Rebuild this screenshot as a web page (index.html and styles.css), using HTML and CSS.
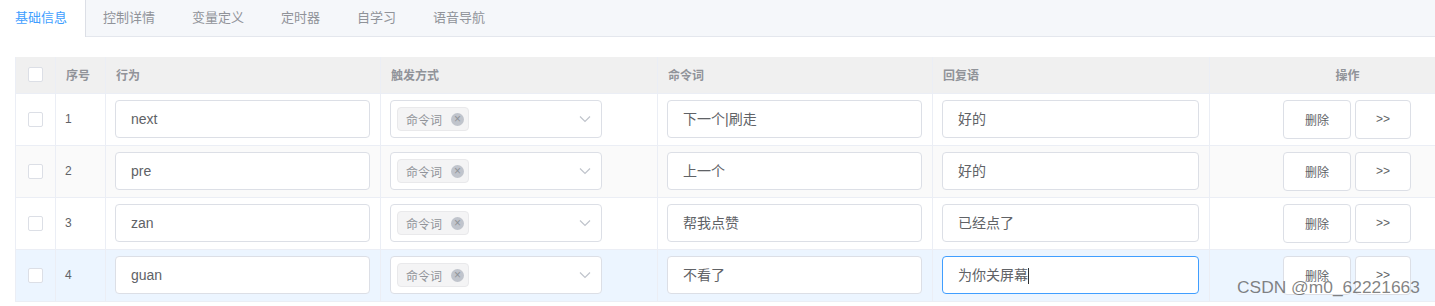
FILE: index.html
```html
<!DOCTYPE html>
<html lang="zh-CN">

<head>
    <meta charset="UTF-8">
    <meta name="viewport" content="width=device-width, initial-scale=1.0">
    <title>基础信息</title>
    <link rel="stylesheet" href="styles.css">
</head>

<body>
    <div class="tabs">
        <div class="tab active">基础信息</div>
        <div class="tab">控制详情</div>
        <div class="tab">变量定义</div>
        <div class="tab">定时器</div>
        <div class="tab">自学习</div>
        <div class="tab">语音导航</div>
    </div>

    <div class="table-wrap">
        <table class="grid">
            <colgroup>
                <col class="c-check">
                <col class="c-index">
                <col class="c-field">
                <col class="c-field2">
                <col class="c-field">
                <col class="c-field2">
                <col class="c-ops">
            </colgroup>
            <thead>
                <tr>
                    <th class="center"><span class="checkbox"></span></th>
                    <th>序号</th>
                    <th>行为</th>
                    <th>触发方式</th>
                    <th>命令词</th>
                    <th>回复语</th>
                    <th class="center">操作</th>
                </tr>
            </thead>
            <tbody>
                <tr>
                    <td class="center"><span class="checkbox"></span></td>
                    <td>1</td>
                    <td><div class="input">next</div></td>
                    <td>
                        <div class="select">
                            <span class="tag">命令词<span class="tag-close">×</span></span>
                            <svg class="arrow" width="12" height="8" viewBox="0 0 12 8"><path d="M1 1.5 L6 6.5 L11 1.5" fill="none" stroke="#c0c4cc" stroke-width="1.2"/></svg>
                        </div>
                    </td>
                    <td><div class="input">下一个|刷走</div></td>
                    <td><div class="input">好的</div></td>
                    <td class="center">
                        <button class="btn btn-del">删除</button><button class="btn btn-more">&gt;&gt;</button>
                    </td>
                </tr>
                <tr class="striped">
                    <td class="center"><span class="checkbox"></span></td>
                    <td>2</td>
                    <td><div class="input">pre</div></td>
                    <td>
                        <div class="select">
                            <span class="tag">命令词<span class="tag-close">×</span></span>
                            <svg class="arrow" width="12" height="8" viewBox="0 0 12 8"><path d="M1 1.5 L6 6.5 L11 1.5" fill="none" stroke="#c0c4cc" stroke-width="1.2"/></svg>
                        </div>
                    </td>
                    <td><div class="input">上一个</div></td>
                    <td><div class="input">好的</div></td>
                    <td class="center">
                        <button class="btn btn-del">删除</button><button class="btn btn-more">&gt;&gt;</button>
                    </td>
                </tr>
                <tr>
                    <td class="center"><span class="checkbox"></span></td>
                    <td>3</td>
                    <td><div class="input">zan</div></td>
                    <td>
                        <div class="select">
                            <span class="tag">命令词<span class="tag-close">×</span></span>
                            <svg class="arrow" width="12" height="8" viewBox="0 0 12 8"><path d="M1 1.5 L6 6.5 L11 1.5" fill="none" stroke="#c0c4cc" stroke-width="1.2"/></svg>
                        </div>
                    </td>
                    <td><div class="input">帮我点赞</div></td>
                    <td><div class="input">已经点了</div></td>
                    <td class="center">
                        <button class="btn btn-del">删除</button><button class="btn btn-more">&gt;&gt;</button>
                    </td>
                </tr>
                <tr class="current">
                    <td class="center"><span class="checkbox"></span></td>
                    <td>4</td>
                    <td><div class="input">guan</div></td>
                    <td>
                        <div class="select">
                            <span class="tag">命令词<span class="tag-close">×</span></span>
                            <svg class="arrow" width="12" height="8" viewBox="0 0 12 8"><path d="M1 1.5 L6 6.5 L11 1.5" fill="none" stroke="#c0c4cc" stroke-width="1.2"/></svg>
                        </div>
                    </td>
                    <td><div class="input">不看了</div></td>
                    <td><div class="input focused">为你关屏幕<span class="caret"></span></div></td>
                    <td class="center">
                        <button class="btn btn-del">删除</button><button class="btn btn-more">&gt;&gt;</button>
                    </td>
                </tr>
            </tbody>
        </table>
    </div>

    <div class="watermark">CSDN @m0_62221663</div>
</body>

</html>
```

FILE: styles.css
```css
html,
body {
    overflow: hidden;
}

body {
    margin: 0;
    padding: 0;
    font-family: "Liberation Sans", "Noto Sans CJK SC", sans-serif;
    color: #606266;
    background: #fff;
}

.tabs {
    display: flex;
    height: 36px;
    background-color: #f5f7fa;
    border-bottom: 1px solid #e4e7ed;
}

.tab {
    padding: 0 19px 0 17px;
    line-height: 36px;
    font-size: 13px;
    color: #909399;
    border-right: 1px solid transparent;
}

.tab.active {
    color: #409eff;
    background-color: #fff;
    border-right-color: #dcdfe6;
    height: 37px;
    padding: 0 18px 0 15px;
}

.table-wrap {
    margin: 20px 0 0 15px;
}

.grid {
    width: 1470px;
    border-collapse: collapse;
    table-layout: fixed;
    border-left: 1px solid #ebeef5;
    font-size: 12px;
}

.c-check {
    width: 40px;
}

.c-index {
    width: 50px;
}

.c-field {
    width: 275px;
}

.c-field2 {
    width: 277px;
}

.c-ops {
    width: 276px;
}

th,
td {
    border-right: 1px solid #ebeef5;
    border-bottom: 1px solid #ebeef5;
    text-align: left;
    box-sizing: border-box;
}

th {
    height: 36px;
    padding: 0 10px;
    background-color: #f0f0f0;
    color: #909399;
    font-weight: bold;
    font-size: 12px;
}

td {
    height: 52px;
    padding: 6px 10px 6px 9px;
    color: #606266;
}

th.center,
td.center {
    text-align: center;
}

.grid th:first-child,
.grid td:first-child {
    padding: 0;
}

.striped td {
    background-color: #fafafa;
}

.current td {
    background-color: #ecf5ff;
}

.checkbox {
    display: inline-block;
    width: 13px;
    height: 13px;
    border: 1px solid #dcdfe6;
    border-radius: 2px;
    background: #fff;
    vertical-align: middle;
}

.input {
    height: 38px;
    box-sizing: border-box;
    border: 1px solid #dcdfe6;
    border-radius: 4px;
    background: #fff;
    padding: 0 15px;
    line-height: 36px;
    font-size: 14px;
    color: #606266;
    white-space: nowrap;
}

.input.focused {
    border-color: #409eff;
}

.caret {
    display: inline-block;
    width: 1px;
    height: 16px;
    background: #303133;
    vertical-align: middle;
}

.select {
    display: flex;
    align-items: center;
    justify-content: space-between;
    width: 212px;
    height: 38px;
    box-sizing: border-box;
    border: 1px solid #dcdfe6;
    border-radius: 4px;
    background: #fff;
    padding: 0 10px 0 6px;
}

.tag {
    display: inline-flex;
    align-items: center;
    height: 24px;
    box-sizing: border-box;
    padding: 0 4px 0 8px;
    background-color: #f4f4f5;
    border: 1px solid #e9e9eb;
    border-radius: 4px;
    color: #909399;
    font-size: 12px;
}

.tag-close {
    display: inline-flex;
    align-items: center;
    justify-content: center;
    width: 13px;
    height: 13px;
    margin-left: 9px;
    border-radius: 50%;
    background-color: #c0c4cc;
    color: #909399;
    font-size: 12px;
    line-height: 1;
}

.btn {
    height: 39px;
    box-sizing: border-box;
    border: 1px solid #dcdfe6;
    border-radius: 4px;
    background: #fff;
    color: #606266;
    font-family: "Liberation Sans", "Noto Sans CJK SC", sans-serif;
    font-size: 12px;
    cursor: pointer;
    vertical-align: middle;
}

.btn-del {
    width: 68px;
}

.btn-more {
    width: 56px;
    margin-left: 4px;
}

.watermark {
    position: absolute;
    left: 1237px;
    top: 277px;
    font-family: "Liberation Sans", sans-serif;
    font-size: 17.4px;
    color: rgba(90, 90, 90, 0.75);
    pointer-events: none;
}
```
